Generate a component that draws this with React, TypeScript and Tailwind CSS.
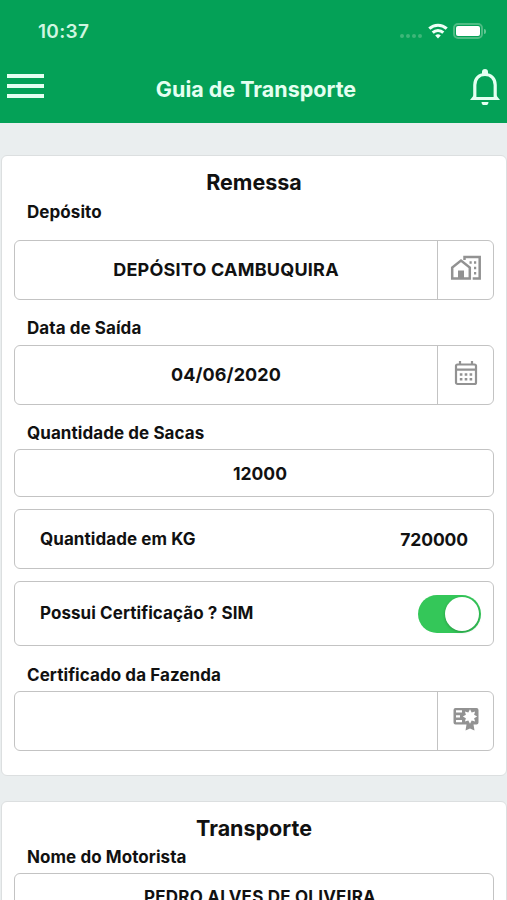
import React, { useState } from 'react';

interface CardProps {
    title: string;
    className?: string;
    children: React.ReactNode;
}

const Card: React.FC<CardProps> = ({ title, className = '', children }) => (
    <section className={`ml-px shrink-0 rounded-md border border-[#dcdfe0] bg-white px-3 ${className}`}>
        <h2 className="mt-3 h-7 text-center text-[21.5px] leading-7 font-bold">{title}</h2>
        {children}
    </section>
);

interface FieldProps {
    value: string;
    className?: string;
    icon?: React.ReactNode;
}

const Field: React.FC<FieldProps> = ({ value, className = 'text-[18px]', icon }) => (
    <div className={`flex rounded-md border-[1.5px] border-[#c3c3c3] font-bold ${className}`}>
        <div className={`flex flex-1 items-center justify-center ${icon ? 'pb-0.5' : 'pt-0.5 pl-3'}`}>{value}</div>
        {icon && (
            <button className="flex w-14 items-center justify-center border-l border-[#c3c3c3] text-[#929292]">{icon}</button>
        )}
    </div>
);

const Label: React.FC<{ className?: string; children: React.ReactNode }> = ({ className = '', children }) => (
    <div className={`pl-[13px] text-[17px] leading-6 font-bold tracking-[0.07px] ${className}`}>{children}</div>
);

const DepositIcon = () => (
    <svg width="32" height="26" viewBox="0 0 32 26" fill="none" stroke="currentColor" strokeWidth="2.5" className="-mt-1">
        <path d="M2.2 23.6V12.5L11 5.5l8.8 7v11.1H2.2Z" />
        <path d="M8 24v-8.5h6V24Z" fill="currentColor" stroke="none" />
        <path d="M14.5 5V2.1h15.2v21.5h-7" />
        <path d="M19.500 7.500h2.200M24 7.500h2.200M24 13h2.200M24 18.200h2.200" />
    </svg>
);

const CalendarIcon = () => (
    <svg width="24" height="26" viewBox="0 0 24 26" fill="none" stroke="currentColor" strokeWidth="2.2" className="-mt-1">
        <rect x="2" y="4.5" width="20" height="19.5" rx="1.5" />
        <path d="M2 9.700h20M6 1v4M18 1v4" />
        <path d="M5.800 14.500h2.600M10.700 14.500h2.600M15.600 14.500h2.600M5.800 19.300h2.600M10.700 19.300h2.600M15.600 19.300h2.600" strokeWidth="2.6" />
    </svg>
);

const CertificateIcon = () => (
    <svg width="26" height="24" viewBox="0 0 26 24" fill="currentColor" className="-mt-1">
        <path
            fillRule="evenodd"
            d="M2.500 1h21A2 2 0 0 1 25.500 3v12.500a2 2 0 0 1-2 2h-3l1 6-4.500-2-4.500 2 1-6h-11a2 2 0 0 1-2-2V3a2 2 0 0 1 2-2ZM3 3.300v2.200h6V3.300ZM3 8.200v2.200h4V8.200ZM3 13v2.200h6V13ZM17 2.300l1.700 3.100 3.400-1-1 3.400 3.100 1.700-3.100 1.700 1 3.400-3.400-1L17 16.700l-1.700-3.100-3.400 1 1-3.400-3.100-1.700 3.100-1.700-1-3.400 3.400 1Z"
        />
    </svg>
);

const StatusBar = () => (
    <div className="flex h-[62px] items-center justify-between pr-[21px] pl-[38px]">
        <span className="mt-0.5 text-[19px] font-semibold tracking-[0.3px] text-[#d0f6e1]">10:37</span>
        <div className="flex items-center">
            <div className="mt-2.5 mr-[6px] flex gap-[2px]">
                <i className="size-1 rounded-full bg-[#3eb679]" />
                <i className="size-1 rounded-full bg-[#3eb679]" />
                <i className="size-1 rounded-full bg-[#3eb679]" />
                <i className="size-1 rounded-full bg-[#3eb679]" />
            </div>
            <svg width="20" height="16" viewBox="0 0 20 16" fill="none" stroke="#effff7" strokeWidth="3">
                <path d="M1.300 5.700a12.500 12.500 0 0 1 17.400 0" />
                <path d="M4.700 9.700a7.600 7.600 0 0 1 10.600 0" />
                <path d="M10 15.500 7.200 12.400a4.200 4.200 0 0 1 5.600 0Z" fill="#effff7" stroke="none" />
            </svg>
            <div className="ml-[5px] h-4 w-[30px] rounded-[5px] border-2 border-[#4fbc84] p-px">
                <div className="h-full rounded-[2px] bg-white" />
            </div>
            <div className="ml-px h-[5px] w-[2px] rounded-r bg-[#68c695]" />
        </div>
    </div>
);

const Header = () => (
    <header className="h-[123px] shrink-0 bg-[#04a157] text-[#e4fff1]">
        <StatusBar />
        <div className="flex h-[54px] items-center justify-between pr-[7px] pl-[7px]">
            <button className="-mt-1.5 flex w-[37px] flex-col gap-[6px]">
                <span className="h-1 bg-current" />
                <span className="h-1 bg-current" />
                <span className="h-1 bg-current" />
            </button>
            <h1 className="-ml-0.5 text-[21.5px] font-bold">Guia de Transporte</h1>
            <svg width="30" height="36" viewBox="0 0 30 36" fill="none" stroke="currentColor" strokeWidth="3.2" className="-mt-1">
                <path d="M4.800 29V16C4.800 9.500 9 5.500 15 5.500S25.200 9.500 25.200 16v13" />
                <path d="M0 31 4 26v2h22v-2l4 5Z" fill="currentColor" stroke="none" />
                <path d="M12 5.500V3a3 3 0 0 1 6 0v2.500ZM11.500 33h7a3.500 3.500 0 0 1-7 0Z" fill="currentColor" stroke="none" />
            </svg>
        </div>
    </header>
);

export default function App() {
    const [certified, setCertified] = useState(true);

    return (
        <div className="flex h-[900px] w-[507px] flex-col overflow-hidden bg-[#eaeeef] font-['Inter',sans-serif] text-[#111]">
            <Header />

            <Card title="Remessa" className="mt-8 h-[621px]">
                <Label className="mt-1">Depósito</Label>
                <Field value="DEPÓSITO CAMBUQUIRA" className="mt-4 h-[60px] text-[18px] tracking-[0.22px]" icon={<DepositIcon />} />

                <Label className="mt-4">Data de Saída</Label>
                <Field value="04/06/2020" className="mt-[5px] h-[60px] text-[18px] tracking-[0.1px]" icon={<CalendarIcon />} />

                <Label className="mt-4">Quantidade de Sacas</Label>
                <Field value="12000" className="mt-1 h-12 text-[17.5px]" />

                <div className="mt-3 flex h-[60px] items-center justify-between rounded-md border-[1.5px] border-[#c3c3c3] px-[25px] pt-0.5 font-bold">
                    <span className="text-[17px] tracking-[0.07px]">Quantidade em KG</span>
                    <span className="text-[17.5px] tracking-[-0.1px]">720000</span>
                </div>

                <div className="mt-3 flex h-[65px] items-center justify-between rounded-md border-[1.5px] border-[#c3c3c3] pr-3 pl-[25px] text-[17px] font-bold tracking-[0.07px]">
                    <span>Possui Certificação ? {certified ? 'SIM' : 'NÃO'}</span>
                    <button
                        role="switch"
                        aria-checked={certified}
                        onClick={() => setCertified(!certified)}
                        className={`flex h-[38px] w-[63px] items-center rounded-full p-[2px] ${certified ? 'justify-end bg-[#34c759]' : 'bg-gray-200'}`}
                    >
                        <span className="size-[34px] rounded-full bg-white shadow-[0_1px_3px_rgba(0,0,0,0.25)]" />
                    </button>
                </div>

                <Label className="mt-[17px]">Certificado da Fazenda</Label>
                <Field value="" className="mt-1 h-[60px]" icon={<CertificateIcon />} />
            </Card>

            <Card title="Transporte" className="mt-[25px] h-[400px]">
                <Label className="mt-[3px]">Nome do Motorista</Label>
                <Field value="PEDRO ALVES DE OLIVEIRA" className="mt-1 h-12 text-[17px] tracking-[0.22px]" />
            </Card>
        </div>
    );
}
